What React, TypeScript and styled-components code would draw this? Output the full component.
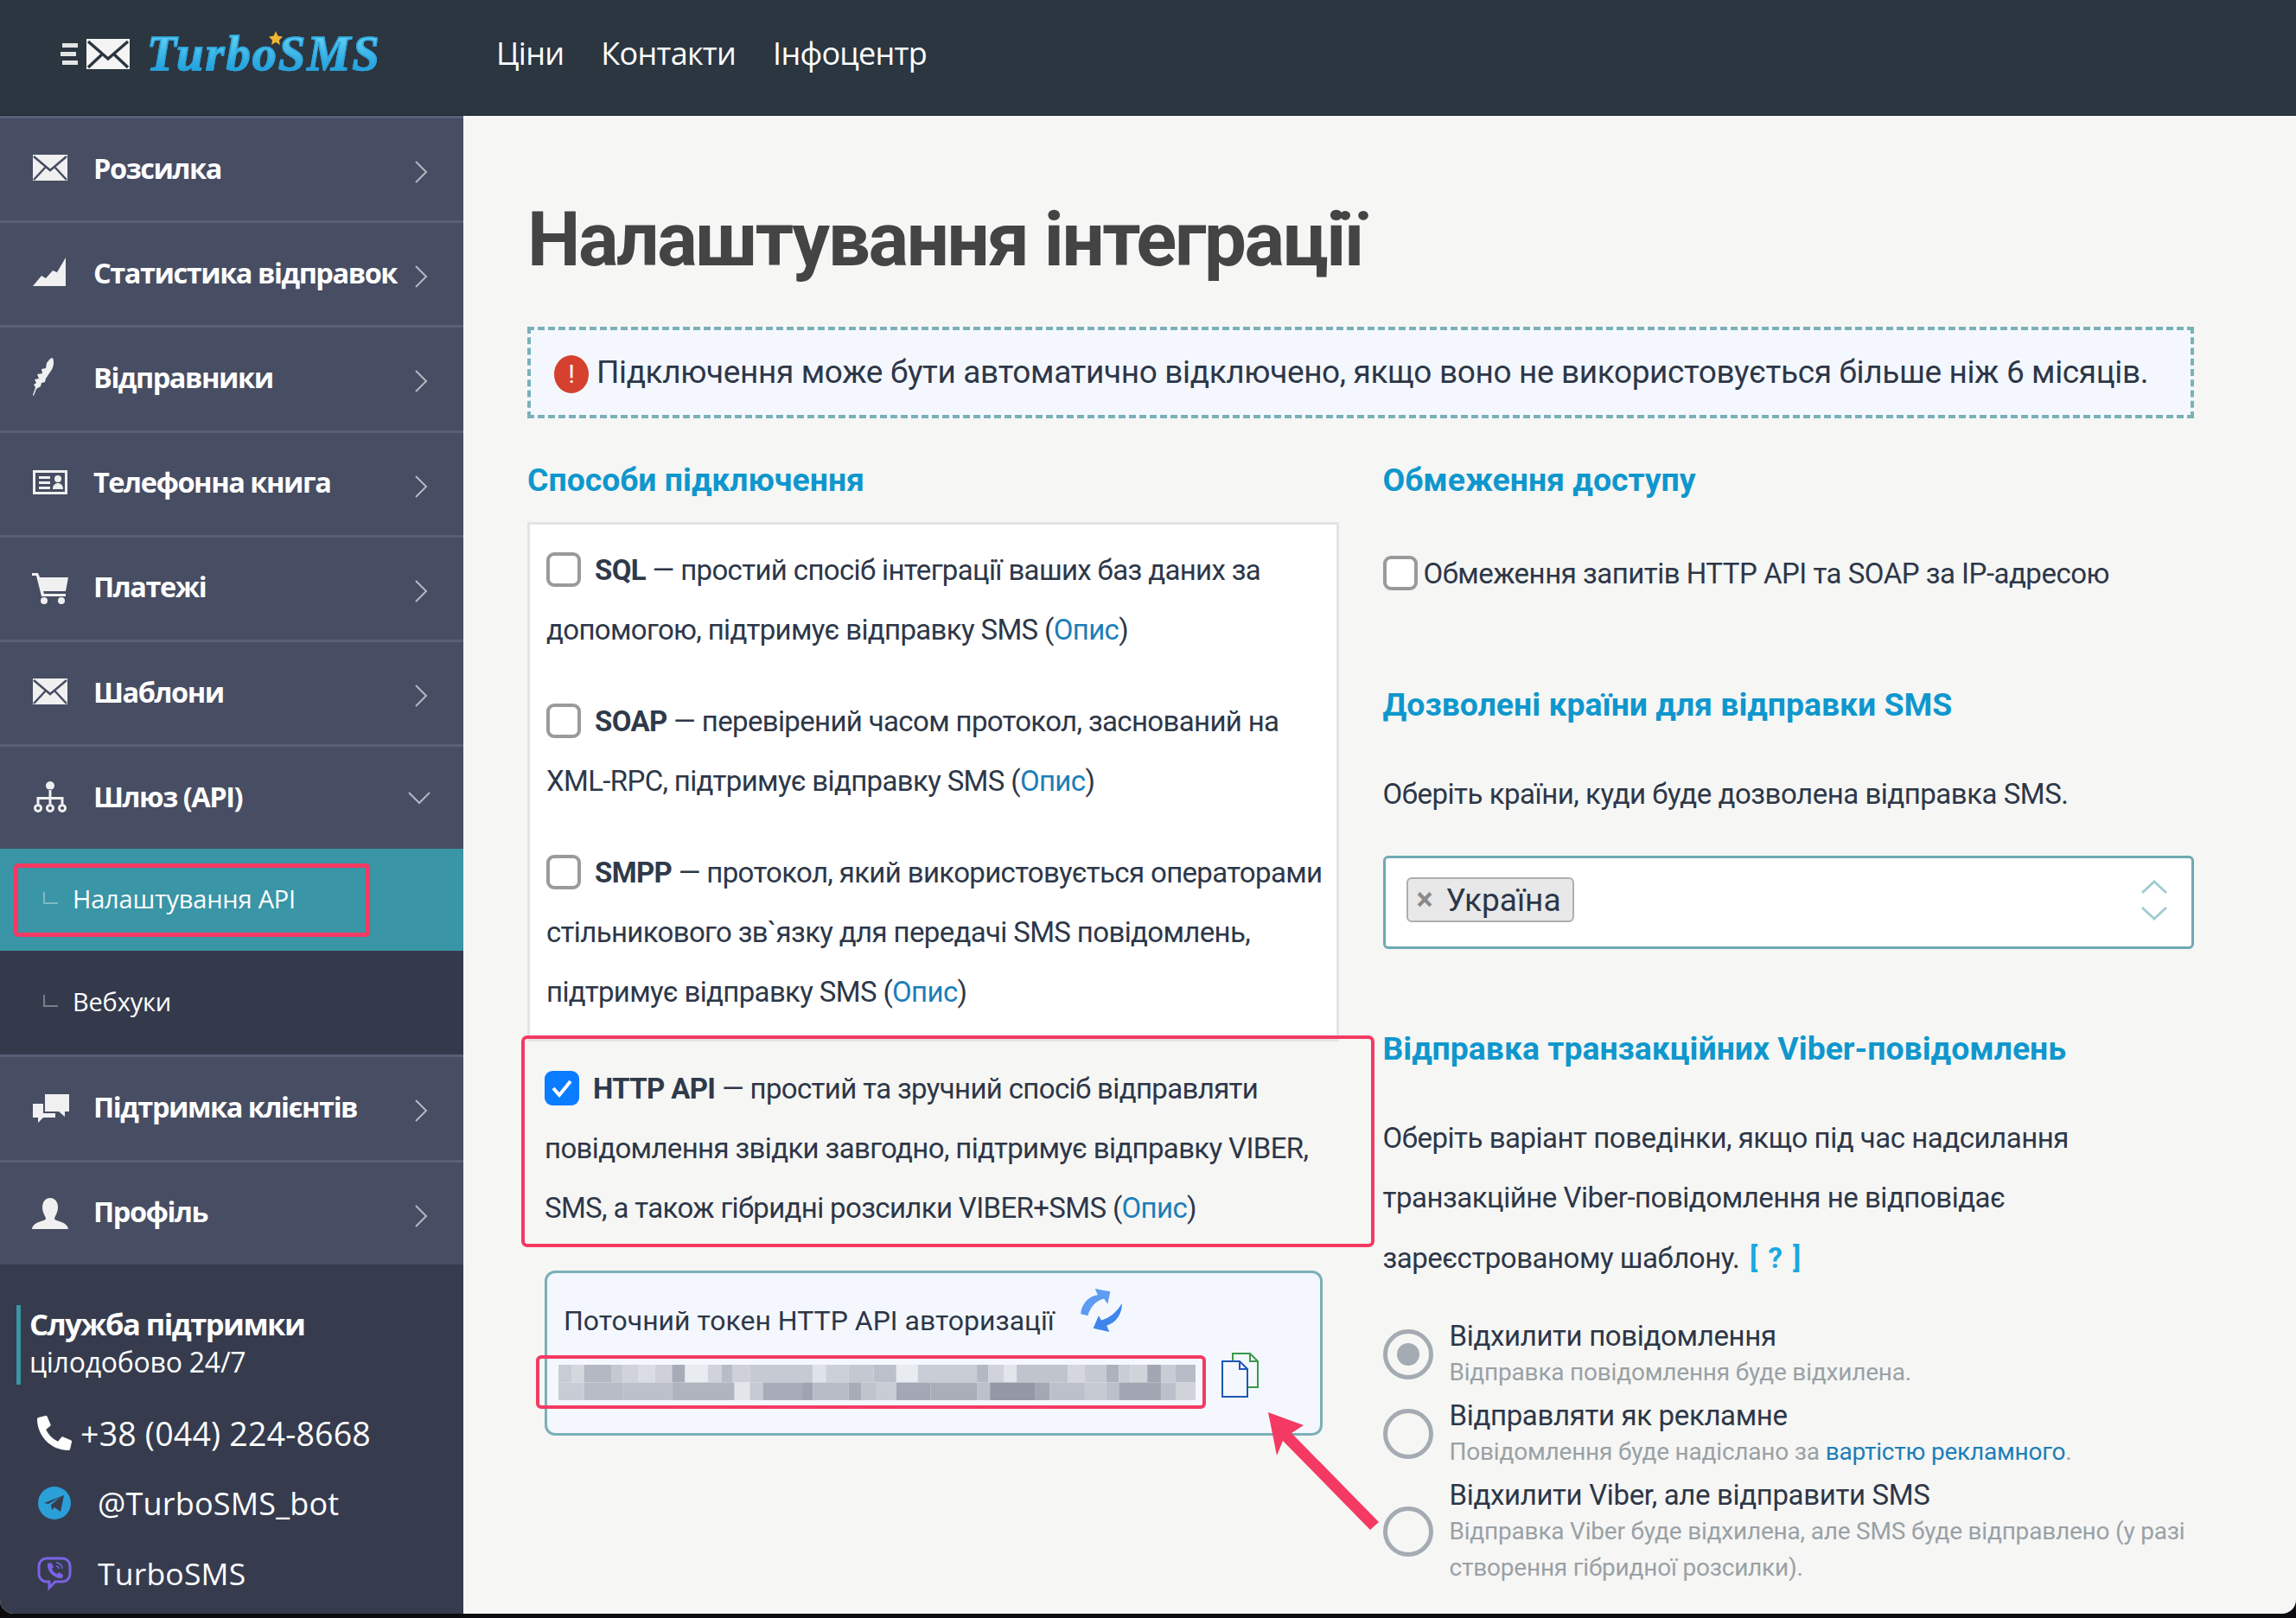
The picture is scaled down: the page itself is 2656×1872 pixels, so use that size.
import React from 'react';
import styled, { createGlobalStyle } from 'styled-components';
import { FaPhoneAlt } from 'react-icons/fa';

const GlobalStyle = createGlobalStyle`
  html, body {
    margin: 0;
    padding: 0;
    background: #0c0c0e;
  }
  * {
    box-sizing: border-box;
  }
`;

const BODY_FONT = `Roboto, "Noto Sans", sans-serif`;
const NAV_FONT = `"Open Sans", "Noto Sans", sans-serif`;

const Shell = styled.div`
  position: relative;
  width: 2656px;
  height: 1867px;
  display: flex;
  flex-direction: column;
  overflow: hidden;
  border-radius: 0 0 16px 16px;
  background: #f6f6f4;
`;

const TopBar = styled.header`
  height: 134px;
  flex: none;
  display: flex;
  align-items: center;
  background: #2b3640;
  padding: 0 0 9px 70px;
  border-bottom: 1px solid #1e2730;
`;

const Logo = styled.div`
  display: flex;
  align-items: center;
  width: 504px;
  gap: 6px;
`;

const LogoText = styled.span`
  position: relative;
  font-family: "Liberation Serif", serif;
  font-style: italic;
  font-weight: 700;
  font-size: 56px;
  line-height: 64px;
  letter-spacing: 2.2px;
  background: linear-gradient(180deg, #6ad6f4 10%, #1699da 90%);
  -webkit-background-clip: text;
  background-clip: text;
  color: transparent;
  -webkit-text-stroke: 1.5px #2aa4de;
  margin-left: 10px;
`;

const LogoStar = styled.svg`
  position: absolute;
  left: 141px;
  top: 6px;
  width: 16px;
  height: 16px;
`;

const TopLink = styled.a`
  font-family: ${NAV_FONT};
  font-size: 36px;
  line-height: 50px;
  color: #fff;
  margin-right: 43px;
  letter-spacing: -0.75px;
`;

const Body = styled.div`
  flex: 1;
  display: flex;
  min-height: 0;
`;

const Sidebar = styled.aside`
  width: 536px;
  flex: none;
  background: #363c4e;
  display: flex;
  flex-direction: column;
  font-family: ${NAV_FONT};
`;

const NavItem = styled.div`
  height: 121.2px;
  flex: none;
  display: flex;
  align-items: center;
  background: #474d62;
  border-top: 3px solid #595f77;
  padding: 0 0 4px 36px;
`;

const NavIcon = styled.svg`
  width: 44px;
  height: 44px;
  flex: none;
  margin-right: 28px;
  fill: #f0f0f0;
`;

const NavLabel = styled.span`
  flex: 1;
  font-size: 32.5px;
  font-weight: 700;
  color: #fff;
  letter-spacing: -1.45px;
  white-space: nowrap;
`;

const Chevron = styled.svg<{ $open?: boolean }>`
  flex: none;
  fill: none;
  stroke: #b4b8c4;
  stroke-width: 2;
  width: ${p => (p.$open ? '26px' : '16px')};
  height: ${p => (p.$open ? '16px' : '26px')};
  margin-right: ${p => (p.$open ? '38px' : '41px')};
  margin-top: ${p => (p.$open ? '4px' : '10px')};
`;

const SubItem = styled.div<{ $active?: boolean }>`
  height: ${p => (p.$active ? '118px' : '120px')};
  flex: none;
  display: flex;
  align-items: center;
  background: ${p => (p.$active ? '#3a95a6' : '#343a4c')};
  padding-left: 16px;
`;

const SubLink = styled.div<{ $marked?: boolean }>`
  width: 412px;
  height: 85px;
  display: flex;
  align-items: center;
  gap: 17px;
  padding: 0 0 4px 29px;
  border: 5px solid ${p => (p.$marked ? '#f43a63' : 'transparent')};
  border-radius: 5px;
  font-size: 29px;
  letter-spacing: -0.2px;
  color: #fff;
`;

const SubMark = styled.span`
  width: 17px;
  height: 14px;
  border-left: 2px solid rgba(255, 255, 255, 0.35);
  border-bottom: 2px solid rgba(255, 255, 255, 0.35);
`;

const Support = styled.div`
  padding: 47px 0 0 19px;
  color: #fff;
`;

const SupportHead = styled.div`
  border-left: 5px solid #3a95a6;
  padding-left: 10px;
  height: 92px;
`;

const SupportTitle = styled.div`
  font-size: 34.5px;
  line-height: 44px;
  font-weight: 700;
  letter-spacing: -1.5px;
`;

const SupportSub = styled.div`
  font-size: 32px;
  line-height: 44px;
  letter-spacing: -0.25px;
`;

const ContactList = styled.div`
  margin-top: 16px;
`;

const ContactRow = styled.div<{ $gap: number; $size: number }>`
  height: 81px;
  display: flex;
  align-items: center;
  gap: ${p => p.$gap}px;
  padding-left: 24px;
  font-size: ${p => p.$size}px;
  letter-spacing: 0.2px;
`;

const ContactIcon = styled.svg`
  width: 40px;
  height: 40px;
  flex: none;
`;

const Main = styled.main`
  flex: 1;
  min-width: 0;
  padding: 93px 118px 0 74px;
  font-family: ${BODY_FONT};
  font-size: 33px;
  letter-spacing: -0.65px;
  color: #2d3748;
`;

const Title = styled.h1`
  margin: 0 0 51px;
  font-family: ${BODY_FONT};
  font-size: 87px;
  line-height: 100px;
  font-weight: 700;
  letter-spacing: -2.4px;
  color: #444;
`;

const Alert = styled.div`
  height: 106px;
  display: flex;
  align-items: center;
  gap: 9px;
  padding: 0 0 2px 27px;
  background: #f4f8fe;
  border: 4px dashed #7ab0b8;
  font-size: 37px;
  letter-spacing: -0.37px;
  white-space: nowrap;
`;

const AlertMark = styled.span`
  width: 40px;
  height: 44px;
  flex: none;
  margin-top: 6px;
  border-radius: 50%;
  background: #d5402f;
  color: #fff;
  font-size: 30px;
  line-height: 44px;
  text-align: center;
`;

const Columns = styled.div`
  display: grid;
  grid-template-columns: 1fr 1fr;
  column-gap: 51px;
  margin-top: 46px;
`;

const Column = styled.div`
  min-width: 0;
`;

const Heading = styled.h2<{ $top?: number }>`
  margin: ${p => p.$top ?? 0}px 0 0;
  font-size: 37.4px;
  line-height: 50px;
  font-weight: 700;
  letter-spacing: 0;
  color: #0f97cd;
  white-space: nowrap;
`;

const MethodCard = styled.div`
  margin-top: 24px;
  padding: 18px 10px 20px 19px;
  background: #fff;
  border: 3px solid #e4e4e4;
  display: flex;
  flex-direction: column;
  gap: 37px;
`;

const Method = styled.p`
  margin: 0;
  line-height: 69px;
  white-space: nowrap;
`;

const Box = styled.span<{ $checked?: boolean }>`
  display: inline-flex;
  align-items: center;
  justify-content: center;
  width: 40px;
  height: 40px;
  margin: 14px 16px 0 0;
  vertical-align: top;
  border-radius: 9px;
  border: ${p => (p.$checked ? 'none' : '4px solid #9a9a9a')};
  background: ${p => (p.$checked ? '#0a7cff' : '#fff')};
`;

const Strong = styled.b`
  font-weight: 700;
  color: #2f3a4a;
`;

const DocLink = styled.a`
  color: #1c7eb8;
`;

const Highlight = styled.div`
  margin: -7px -41px 0 -7px;
  padding: 23px 10px 7px 23px;
  border: 4px solid #f43a63;
  border-radius: 7px;
`;

const TokenPanel = styled.div`
  margin: 27px 19px 0 20px;
  height: 191px;
  padding: 25px 0 0 19px;
  background: #f4f8fe;
  border: 3px solid #7ab0b8;
  border-radius: 12px;
`;

const TokenHead = styled.div`
  display: flex;
  align-items: center;
  height: 60px;
  font-size: 32px;
  letter-spacing: 0;
  white-space: nowrap;
`;

const RefreshIcon = styled.svg`
  width: 54px;
  height: 54px;
  margin: -24px 0 0 27px;
`;

const TokenRow = styled.div`
  display: flex;
  align-items: flex-start;
  margin: 10px 0 0 -32px;
`;

const TokenMask = styled.div`
  width: 775px;
  height: 62px;
  padding: 7px 8px 6px 22px;
  border: 4px solid #f43a63;
  border-radius: 6px;
`;

const MaskArt = styled.svg`
  display: block;
  width: 100%;
  height: 100%;
`;

const CopyIcon = styled.svg`
  width: 44px;
  height: 52px;
  margin: -3px 0 0 17px;
`;

const Pointer = styled.svg`
  position: absolute;
  left: 1450px;
  top: 1620px;
  width: 160px;
  height: 150px;
  overflow: visible;
`;

const AccessRow = styled.div`
  margin-top: 63px;
  height: 40px;
  display: flex;
  align-items: center;
  letter-spacing: -0.5px;
  white-space: nowrap;
`;

const AccessBox = styled(Box)`
  margin: 0 7px 0 0;
`;

const Copy = styled.p<{ $top: number }>`
  margin: ${p => p.$top}px 0 0;
  line-height: 69.5px;
  letter-spacing: -0.48px;
  white-space: nowrap;
`;

const SelectBox = styled.div`
  margin-top: 36px;
  height: 108px;
  display: flex;
  align-items: center;
  justify-content: space-between;
  padding: 0 27px 5px 24px;
  background: #fff;
  border: 3px solid #6fa9b2;
  border-radius: 6px;
`;

const Tag = styled.span`
  height: 52px;
  width: 194px;
  display: flex;
  align-items: center;
  gap: 15px;
  padding-left: 10px;
  background: #e8e8e8;
  border: 2px solid #aeaeae;
  border-radius: 6px;
  font-size: 37px;
  letter-spacing: 0;
`;

const TagClose = styled.span`
  color: #8a8a8a;
  font-size: 36px;
  font-weight: 700;
`;

const Steppers = styled.div`
  display: flex;
  flex-direction: column;
  gap: 13px;
`;

const StepIcon = styled.svg`
  display: block;
  width: 32px;
  height: 17px;
  fill: none;
  stroke: #a3ccd2;
  stroke-width: 3;
`;

const Hint = styled.span`
  margin-left: 4px;
  color: #1ba8df;
  font-weight: 700;
  letter-spacing: 2px;
`;

const RadioList = styled.div`
  margin-top: 35px;
  display: flex;
  flex-direction: column;
  gap: 8px;
`;

const RadioRow = styled.div`
  display: flex;
  align-items: center;
  gap: 19px;
`;

const RadioDot = styled.span<{ $on?: boolean }>`
  width: 58px;
  height: 58px;
  flex: none;
  display: flex;
  align-items: center;
  justify-content: center;
  border-radius: 50%;
  border: 5px solid #a4abb3;
  &::after {
    content: '';
    width: 26px;
    height: 26px;
    border-radius: 50%;
    background: ${p => (p.$on ? '#a4abb3' : 'transparent')};
  }
`;

const RadioLabel = styled.div`
  font-size: 33px;
  line-height: 42px;
  letter-spacing: -0.35px;
  white-space: nowrap;
`;

const RadioNote = styled.div`
  font-size: 28px;
  line-height: 42px;
  letter-spacing: -0.2px;
  color: #99a1a6;
  white-space: nowrap;
`;

const chevronRight = (
  <Chevron viewBox="0 0 16 26"><path d="M2 1 L14 13 L2 25" /></Chevron>
);

const envelope = (
  <>
    <path d="M2 7h40v30H2z" />
    <path fill="none" stroke="#474d62" strokeWidth="2.500" d="M3 9l19 16L41 9 M3 36l14-15 M41 36L27 21" />
  </>
);

const icons: Record<string, React.ReactNode> = {
  mail: envelope,
  chart: <path d="M2 38l10-12 5 3 8-9 5 2 10-17v33z" />,
  feather: (
    <path d="M2 43l3-9-2-3 3-2-2-4 5-1-2-5 6-1-1-5 5-1 1-6 4-5 3-1c2 5 1 11-2 15l-6 9-1 4-4 1-1 4-5 3-3 8z" />
  ),
  book: (
    <path fillRule="evenodd" d="M2 8h40v28H2z M5 11v22h34V11z M9 15h13v3H9z M9 21h13v3H9z M9 27h13v3H9z M31 14a4 4 0 1 1 0 8 4 4 0 0 1 0-8z M25 30c0-5 3-7 6-7s6 2 6 7z" />
  ),
  cart: (
    <path d="M1 6h7l2 5h33l-3 16H14l1 3h25v3H12L6 9H1z M15 34a4 4 0 1 1 0 8 4 4 0 0 1 0-8z M35 34a4 4 0 1 1 0 8 4 4 0 0 1 0-8z" />
  ),
  tree: (
    <path fillRule="evenodd" d="M22 5a5 5 0 1 1-.01 0z M20.500 14h3v9h14v8h-3v-5H23.500v5h-3v-5H9.500v5h-3v-8h14z M8 31a5 5 0 1 1-.01 0z M8 34a2 2 0 1 0 .01 0z M22 31a5 5 0 1 1-.01 0z M22 34a2 2 0 1 0 .01 0z M36 31a5 5 0 1 1-.01 0z M36 34a2 2 0 1 0 .01 0z" />
  ),
  chat: (
    <path d="M16 8h28v20h-5v6l-7-6H16z M2 19h12v11h14v5H14l-6 6v-6H2z" />
  ),
  user: (
    <path d="M22 6c6 0 9 5 9 11s-4 11-4 13c0 3 15 3 16 12H1c1-9 16-9 16-12 0-2-4-7-4-13s3-11 9-11z" />
  ),
};

const menuTop = [
  { label: 'Розсилка', icon: 'mail' },
  { label: 'Статистика відправок', icon: 'chart' },
  { label: 'Відправники', icon: 'feather' },
  { label: 'Телефонна книга', icon: 'book' },
  { label: 'Платежі', icon: 'cart' },
  { label: 'Шаблони', icon: 'mail' },
];

const menuBottom = [
  { label: 'Підтримка клієнтів', icon: 'chat' },
  { label: 'Профіль', icon: 'user' },
];

const maskTop: [number, number, string][] = [
  [85, 108, '#c8ccd4'], [108, 130, '#d4d7dd'], [130, 178, '#b4b8c2'], [178, 198, '#c4c8d0'],
  [198, 225, '#d0d3da'], [225, 255, '#dadde3'], [255, 285, '#ced1d8'], [285, 308, '#a8acb8'],
  [308, 348, '#e8ebf0'], [348, 372, '#d0d3da'], [372, 392, '#b8bcc6'], [392, 422, '#ced1d8'],
  [422, 533, '#c6cad2'], [533, 556, '#dfe2e8'], [556, 596, '#ccd0d8'], [596, 640, '#c4c8d0'],
  [640, 680, '#bcc0ca'], [680, 718, '#e8ebf0'], [718, 822, '#c8ccd4'], [822, 842, '#b4b8c2'],
  [842, 870, '#d0d3da'], [870, 892, '#e2e5ea'], [892, 982, '#c0c4cc'], [982, 1012, '#d4d7dd'],
  [1012, 1050, '#c6cad2'], [1050, 1072, '#aeb2bc'], [1072, 1092, '#c8ccd4'], [1092, 1122, '#d0d3da'],
  [1122, 1146, '#a2a6b2'], [1146, 1172, '#c8ccd4'], [1172, 1207, '#b8bcc6'],
];

const maskBottom: [number, number, string][] = [
  [85, 130, '#c8ccd4'], [130, 198, '#b8bcc6'], [198, 285, '#bcc0ca'], [285, 395, '#b0b4be'],
  [395, 422, '#e2e5ea'], [422, 445, '#c6cad2'], [445, 513, '#a8acb8'], [513, 533, '#a0a4b0'],
  [533, 596, '#b8bcc6'], [596, 618, '#a8acb8'], [618, 645, '#c0c4cc'], [645, 680, '#c8ccd4'],
  [680, 740, '#a4a8b4'], [740, 822, '#aaaeb8'], [822, 845, '#bcc0ca'], [845, 925, '#9498a4'],
  [925, 950, '#a4a8b4'], [950, 1012, '#bcc0ca'], [1012, 1050, '#c6cad2'], [1050, 1072, '#bcc0ca'],
  [1072, 1146, '#a2a6b2'], [1146, 1172, '#bcc0ca'], [1172, 1207, '#d0d3da'],
];

const App = () => (
  <>
    <GlobalStyle />
    <Shell>
      <TopBar>
        <Logo>
          <svg width="84" height="40" viewBox="0 0 84 40">
            <path fill="#e4e4e4" d="M2 8h18v5H2z M0 18h18v5H0z M2 28h18v5H2z" />
            <path fill="#f4f4f4" d="M30 3h50v35H30z" />
            <path fill="none" stroke="#2b3640" strokeWidth="3.500" d="M32 6l23 20L78 6 M32 36l17-16 M78 36L61 20" />
          </svg>
          <LogoText>
            TurboSMS
            <LogoStar viewBox="0 0 20 20"><path fill="#f2b632" d="M10 0l3 7 7 1-5 5 1 7-6-4-6 4 1-7-5-5 7-1z" /></LogoStar>
          </LogoText>
        </Logo>
        <TopLink>Ціни</TopLink>
        <TopLink>Контакти</TopLink>
        <TopLink>Інфоцентр</TopLink>
      </TopBar>
      <Body>
        <Sidebar>
          {menuTop.map(item => (
            <NavItem key={item.label}>
              <NavIcon viewBox="0 0 44 44">{icons[item.icon]}</NavIcon>
              <NavLabel>{item.label}</NavLabel>
              {chevronRight}
            </NavItem>
          ))}
          <NavItem>
            <NavIcon viewBox="0 0 44 44">{icons.tree}</NavIcon>
            <NavLabel>Шлюз (API)</NavLabel>
            <Chevron $open viewBox="0 0 26 16"><path d="M1 2 L13 14 L25 2" /></Chevron>
          </NavItem>
          <SubItem $active>
            <SubLink $marked><SubMark />Налаштування API</SubLink>
          </SubItem>
          <SubItem>
            <SubLink><SubMark />Вебхуки</SubLink>
          </SubItem>
          {menuBottom.map(item => (
            <NavItem key={item.label}>
              <NavIcon viewBox="0 0 44 44">{icons[item.icon]}</NavIcon>
              <NavLabel>{item.label}</NavLabel>
              {chevronRight}
            </NavItem>
          ))}
          <Support>
            <SupportHead>
              <SupportTitle>Служба підтримки</SupportTitle>
              <SupportSub>цілодобово 24/7</SupportSub>
            </SupportHead>
            <ContactList>
              <ContactRow $gap={10} $size={37.5}>
                <FaPhoneAlt size={40} color="#fff" />
                +38 (044) 224-8668
              </ContactRow>
              <ContactRow $gap={30} $size={36}>
                <ContactIcon viewBox="0 0 40 40">
                  <circle cx="20" cy="20" r="19" fill="#2a9fd8" />
                  <path fill="#363c4e" d="M8 20l23-9-4 19-7-5-3 3-1-6 11-9-14 8z" />
                </ContactIcon>
                @TurboSMS_bot
              </ContactRow>
              <ContactRow $gap={30} $size={35.5}>
                <ContactIcon viewBox="0 0 40 40">
                  <path fill="none" stroke="#7b62e6" strokeWidth="3" d="M11 3h18c5 0 9 4 9 9v9c0 5-4 9-9 9h-8l-7 7v-7h-3c-5 0-9-4-9-9v-9c0-5 4-9 9-9z" />
                  <path fill="#7b62e6" d="M12 9l4-1 3 5-2 2c1 3 3 5 6 6l2-2 5 3-1 4c-9 1-18-8-17-17z" />
                  <path fill="none" stroke="#7b62e6" strokeWidth="1.500" d="M22 8c4 0 7 3 7 7 M22 12c2 0 3 1 3 3" />
                </ContactIcon>
                TurboSMS
              </ContactRow>
            </ContactList>
          </Support>
        </Sidebar>
        <Main>
          <Title>Налаштування інтеграції</Title>
          <Alert>
            <AlertMark>!</AlertMark>
            Підключення може бути автоматично відключено, якщо воно не використовується більше ніж 6 місяців.
          </Alert>
          <Columns>
            <Column>
              <Heading>Способи підключення</Heading>
              <MethodCard>
                <Method>
                  <Box /><Strong>SQL</Strong> — простий спосіб інтеграції ваших баз даних за<br />
                  допомогою, підтримує відправку SMS (<DocLink>Опис</DocLink>)
                </Method>
                <Method>
                  <Box /><Strong>SOAP</Strong> — перевірений часом протокол, заснований на<br />
                  XML-RPC, підтримує відправку SMS (<DocLink>Опис</DocLink>)
                </Method>
                <Method>
                  <Box /><Strong>SMPP</Strong> — протокол, який використовується операторами<br />
                  стільникового зв`язку для передачі SMS повідомлень,<br />
                  підтримує відправку SMS (<DocLink>Опис</DocLink>)
                </Method>
              </MethodCard>
              <Highlight>
                <Method>
                  <Box $checked>
                    <svg width="26" height="22" viewBox="0 0 26 22">
                      <path fill="none" stroke="#fff" strokeWidth="4" d="M3 11l7 8L23 3" />
                    </svg>
                  </Box>
                  <Strong>HTTP API</Strong> — простий та зручний спосіб відправляти<br />
                  повідомлення звідки завгодно, підтримує відправку VIBER,<br />
                  SMS, а також гібридні розсилки VIBER+SMS (<DocLink>Опис</DocLink>)
                </Method>
              </Highlight>
              <TokenPanel>
                <TokenHead>
                  Поточний токен HTTP API авторизації
                  <RefreshIcon viewBox="0 0 52 52">
                    <path fill="#5d9cf0" d="M3 30C4 18 13 10 22 9l-3-7 17 3-3 14-4-6c-8 2-15 8-18 19z" />
                    <path fill="#3f86ec" d="M49 18c0 13-7 22-17 25l3 7-18-4 6-14 3 5c10-3 17-9 23-19z" />
                  </RefreshIcon>
                </TokenHead>
                <TokenRow>
                  <TokenMask>
                    <MaskArt viewBox="85 0 1122 2" preserveAspectRatio="none">
                      {maskTop.map(([a, b, c]) => <rect key={a} x={a} y={0} width={b - a} height={1} fill={c} />)}
                      {maskBottom.map(([a, b, c]) => <rect key={a} x={a} y={1} width={b - a} height={1} fill={c} />)}
                    </MaskArt>
                  </TokenMask>
                  <CopyIcon viewBox="0 0 44 52">
                    <path fill="#f4f8fe" stroke="#3a9a4a" strokeWidth="2" d="M14 1h20l9 9v30H14z M34 1v9h9" />
                    <path fill="#f4f8fe" stroke="#1f56b8" strokeWidth="2" d="M2 10h20l9 9v32H2z M22 10v9h9" />
                  </CopyIcon>
                </TokenRow>
              </TokenPanel>
            </Column>
            <Column>
              <Heading>Обмеження доступу</Heading>
              <AccessRow><AccessBox />Обмеження запитів HTTP API та SOAP за IP-адресою</AccessRow>
              <Heading $top={107}>Дозволені країни для відправки SMS</Heading>
              <Copy $top={44}>Оберіть країни, куди буде дозволена відправка SMS.</Copy>
              <SelectBox>
                <Tag><TagClose>×</TagClose>Україна</Tag>
                <Steppers>
                  <StepIcon viewBox="0 0 32 17"><path d="M2 15L16 2l14 13" /></StepIcon>
                  <StepIcon viewBox="0 0 32 17"><path d="M2 2l14 13L30 2" /></StepIcon>
                </Steppers>
              </SelectBox>
              <Heading $top={90}>Відправка транзакційних Viber-повідомлень</Heading>
              <Copy $top={44}>
                Оберіть варіант поведінки, якщо під час надсилання<br />
                транзакційне Viber-повідомлення не відповідає<br />
                зареєстрованому шаблону. <Hint>[ ? ]</Hint>
              </Copy>
              <RadioList>
                <RadioRow>
                  <RadioDot $on />
                  <div>
                    <RadioLabel>Відхилити повідомлення</RadioLabel>
                    <RadioNote>Відправка повідомлення буде відхилена.</RadioNote>
                  </div>
                </RadioRow>
                <RadioRow>
                  <RadioDot />
                  <div>
                    <RadioLabel>Відправляти як рекламне</RadioLabel>
                    <RadioNote>Повідомлення буде надіслано за <DocLink>вартістю рекламного</DocLink>.</RadioNote>
                  </div>
                </RadioRow>
                <RadioRow>
                  <RadioDot />
                  <div>
                    <RadioLabel>Відхилити Viber, але відправити SMS</RadioLabel>
                    <RadioNote>Відправка Viber буде відхилена, але SMS буде відправлено (у разі<br />створення гібридної розсилки).</RadioNote>
                  </div>
                </RadioRow>
              </RadioList>
            </Column>
          </Columns>
        </Main>
      </Body>
      <Pointer viewBox="0 0 160 150">
        <path fill="#f43a63" d="M17 14l41 15-14 9 101 103-10 9L34 47l-7 17z" />
      </Pointer>
    </Shell>
  </>
);

export default App;
